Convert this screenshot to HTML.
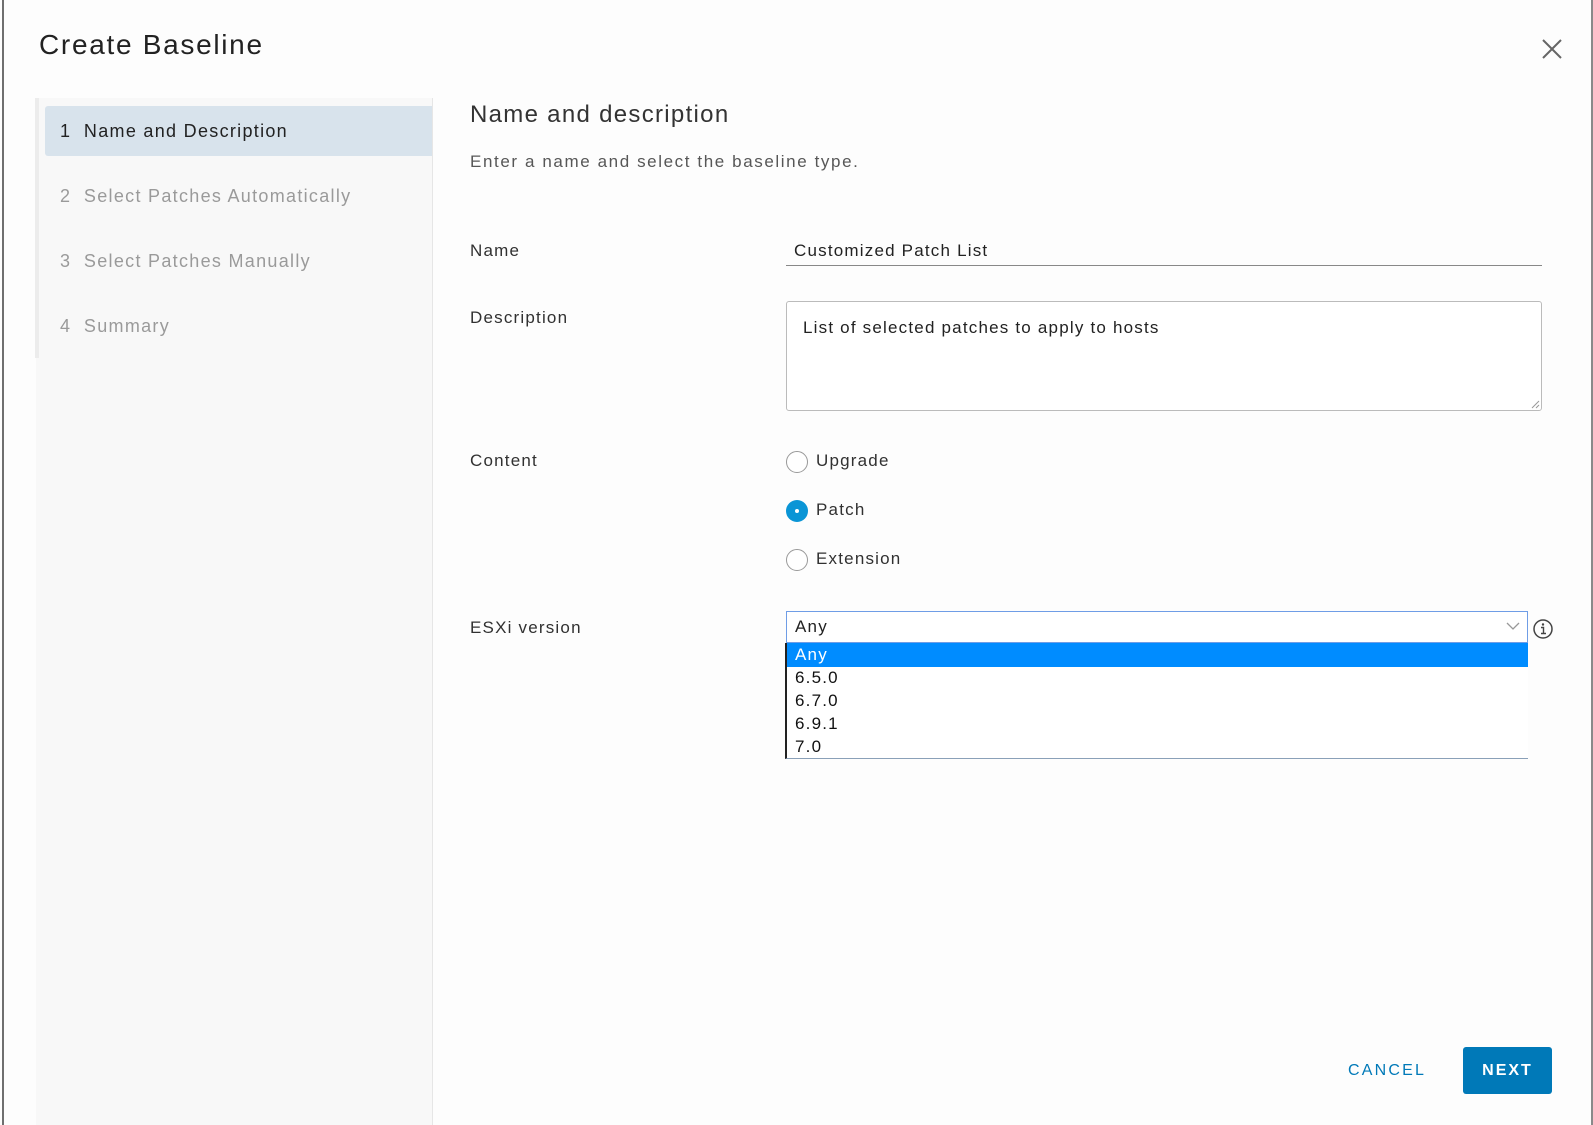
<!DOCTYPE html>
<html><head><meta charset="utf-8"><style>
*{margin:0;padding:0;box-sizing:border-box}
body{width:1593px;height:1125px;background:#fdfdfd;font-family:"Liberation Sans",sans-serif;position:relative;overflow:hidden;color:#313131}
.a{position:absolute;white-space:nowrap}
.t{letter-spacing:1.2px}
</style></head><body>
<div class="a" style="left:2px;top:0;width:2px;height:1125px;background:#6f6f6f"></div>
<div class="a" style="left:1591px;top:0;width:2px;height:1125px;background:#8a8a8a"></div>
<div class="a" style="left:39px;top:29px;font-size:28px;color:#222;letter-spacing:1.7px">Create Baseline</div>
<svg class="a" style="left:1541px;top:38px" width="22" height="22"><path d="M2 2L20 20M20 2L2 20" stroke="#666" stroke-width="2"/></svg>
<div class="a" style="left:36px;top:98px;width:397px;height:1027px;background:#f8f8f8;border-right:1px solid #e6e6e6"></div>
<div class="a" style="left:35px;top:98px;width:4px;height:260px;background:#ececec"></div>
<div class="a" style="left:45px;top:106px;width:387px;height:50px;background:#d8e3ec;border-radius:3px 0 0 3px"></div>
<div class="a" style="left:60px;top:121px;font-size:18px;color:#222;letter-spacing:1.3px">1&nbsp;&nbsp;Name and Description</div>
<div class="a" style="left:60px;top:186px;font-size:18px;color:#9a9a9a;letter-spacing:1.3px">2&nbsp;&nbsp;Select Patches Automatically</div>
<div class="a" style="left:60px;top:251px;font-size:18px;color:#9a9a9a;letter-spacing:1.3px">3&nbsp;&nbsp;Select Patches Manually</div>
<div class="a" style="left:60px;top:316px;font-size:18px;color:#9a9a9a;letter-spacing:1.3px">4&nbsp;&nbsp;Summary</div>
<div class="a" style="left:470px;top:101px;font-size:24px;color:#333;letter-spacing:1.3px">Name and description</div>
<div class="a" style="left:470px;top:152px;font-size:17px;color:#575757;letter-spacing:1.6px">Enter a name and select the baseline type.</div>
<div class="a t" style="left:470px;top:241px;font-size:17px">Name</div>
<div class="a t" style="left:470px;top:308px;font-size:17px">Description</div>
<div class="a t" style="left:470px;top:451px;font-size:17px">Content</div>
<div class="a t" style="left:470px;top:618px;font-size:17px">ESXi version</div>
<div class="a t" style="left:794px;top:241px;font-size:17px;color:#222">Customized Patch List</div>
<div class="a" style="left:786px;top:265px;width:756px;height:1px;background:#888"></div>
<div class="a" style="left:786px;top:301px;width:756px;height:110px;border:1px solid #bbb;border-radius:3px;background:#fff"></div>
<div class="a t" style="left:803px;top:318px;font-size:17px;color:#222">List of selected patches to apply to hosts</div>
<svg class="a" style="left:1530px;top:399px" width="10" height="10"><path d="M9 2L2 9M9 6L6 9" stroke="#999"/></svg>
<div class="a" style="left:786px;top:451px;width:22px;height:22px;border:1.5px solid #999;border-radius:50%;background:#fff"></div>
<div class="a t" style="left:816px;top:451px;font-size:17px">Upgrade</div>
<div class="a" style="left:786px;top:500px;width:22px;height:22px;border-radius:50%;background:#0a95d6"></div>
<div class="a" style="left:795px;top:509px;width:4px;height:4px;border-radius:50%;background:#fff"></div>
<div class="a t" style="left:816px;top:500px;font-size:17px">Patch</div>
<div class="a" style="left:786px;top:549px;width:22px;height:22px;border:1.5px solid #999;border-radius:50%;background:#fff"></div>
<div class="a t" style="left:816px;top:549px;font-size:17px">Extension</div>
<div class="a" style="left:786px;top:611px;width:742px;height:32px;border:1px solid #6f9de6;background:#fff"></div>
<div class="a t" style="left:795px;top:617px;font-size:17px;color:#222">Any</div>
<svg class="a" style="left:1506px;top:621px" width="14" height="10"><path d="M1 2L7 8L13 2" stroke="#999" fill="none" stroke-width="1.3"/></svg>
<svg class="a" style="left:1532px;top:618px" width="22" height="22"><circle cx="11" cy="11" r="9" stroke="#444" stroke-width="1.5" fill="none"/><circle cx="11" cy="6.5" r="1.2" fill="#444"/><path d="M9 9.5H11.5V15.5M9 15.5H14" stroke="#444" stroke-width="1.4" fill="none"/></svg>
<div class="a" style="left:785px;top:643px;width:743px;height:116px;background:#fff;border-left:2px solid #222;border-bottom:1px solid #8aa0b8"></div>
<div class="a" style="left:787px;top:643px;width:741px;height:24px;background:#008cff"></div>
<div class="a t" style="left:795px;top:645px;font-size:17px;color:#fff">Any</div>
<div class="a t" style="left:795px;top:668px;font-size:17px;color:#111">6.5.0</div>
<div class="a t" style="left:795px;top:691px;font-size:17px;color:#111">6.7.0</div>
<div class="a t" style="left:795px;top:714px;font-size:17px;color:#111">6.9.1</div>
<div class="a t" style="left:795px;top:737px;font-size:17px;color:#111">7.0</div>
<div class="a" style="left:1348px;top:1062px;font-size:16px;letter-spacing:2.2px;color:#0079b8">CANCEL</div>
<div class="a" style="left:1463px;top:1047px;width:89px;height:47px;background:#0079b8;border-radius:3px;color:#fff;font-size:16px;letter-spacing:2px;text-align:center;line-height:47px;font-weight:bold">NEXT</div>
</body></html>
